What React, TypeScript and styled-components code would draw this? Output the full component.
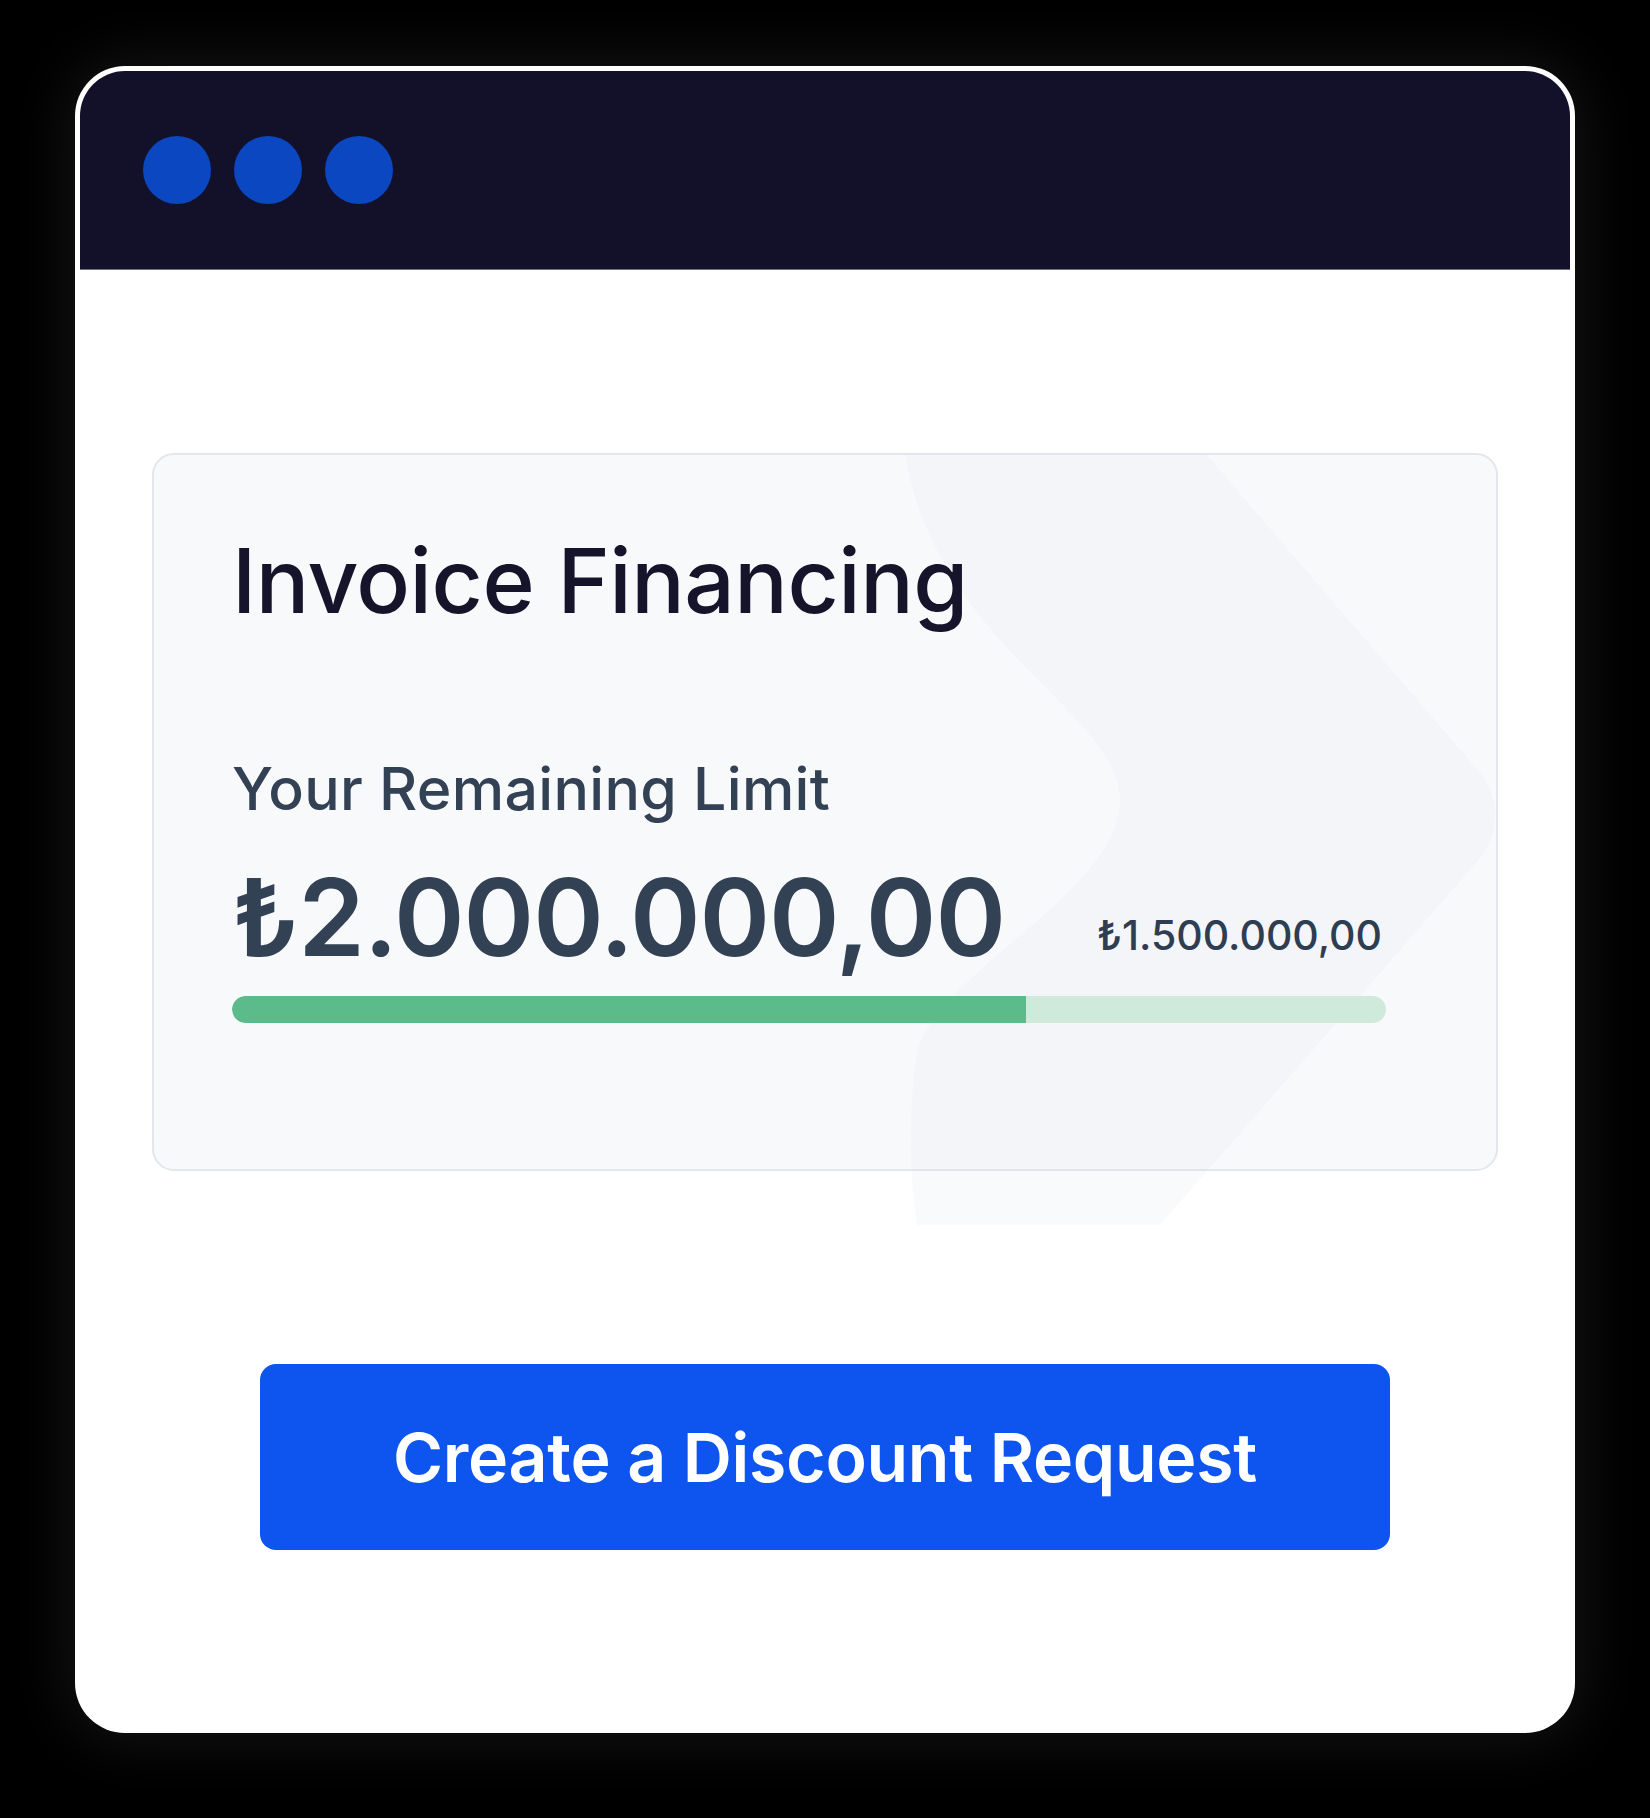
import styled, { createGlobalStyle } from "styled-components";

const GlobalStyle = createGlobalStyle`
  html, body {
    margin: 0;
    padding: 0;
    background: #000;
  }
  * {
    box-sizing: border-box;
  }
`;

// share of the limit shown as used on the bar
const used = 0.688;

const App: React.FC = () => {
  return (
    <>
      <GlobalStyle />
      <Page>
        <Window>
          <TitleBar>
            <Dot />
            <Dot />
            <Dot />
          </TitleBar>
          <Body>
            <Card>
              <Decoration
                width="640"
                height="780"
                viewBox="0 0 640 780"
                aria-hidden="true"
              >
                <path
                  d="M0 0 H300 L575 320 C595 345 595 380 575 405 L255 772 H12 C4 720 4 650 12 600 C30 520 215 440 215 347 C215 260 30 190 0 0 Z"
                  fill="rgba(215, 222, 236, 0.15)"
                />
              </Decoration>
              <Title>Invoice Financing</Title>
              <Label>Your Remaining Limit</Label>
              <AmountRow>
                <Amount>₺2.000.000,00</Amount>
                <SubAmount>₺1.500.000,00</SubAmount>
              </AmountRow>
              <Track>
                <Fill style={{ width: `${used * 100}%` }} />
              </Track>
            </Card>
            <ActionButton>Create a Discount Request</ActionButton>
          </Body>
        </Window>
      </Page>
    </>
  );
};

export default App;

const Page = styled.div`
  width: 1650px;
  min-height: 1818px;
  padding: 66px 75px;
  background: #000;
`;

const Window = styled.div`
  width: 1500px;
  height: 1667px;
  background: #fff;
  border-radius: 50px;
  padding: 5px 5px 0;
  box-shadow: 0 0 60px 8px rgba(22, 22, 22, 0.9);
  display: flex;
  flex-direction: column;
`;

const TitleBar = styled.div`
  height: 199px;
  background: #13112a;
  border-radius: 45px 45px 0 0;
  border-bottom: 1px solid #6f6e80;
  display: flex;
  align-items: center;
  gap: 23px;
  padding-left: 63px;
`;

const Dot = styled.span`
  width: 68px;
  height: 68px;
  border-radius: 50%;
  background: #0c47c2;
`;

const Body = styled.div`
  display: flex;
  flex-direction: column;
  align-items: center;
  padding: 183px 72px 0;
`;

const Card = styled.div`
  position: relative;
  width: 1346px;
  height: 718px;
  border: 2px solid #e3e6ec;
  border-radius: 22px;
  background: #f8f9fb;
  padding: 81px 110px 0 78px;
  display: flex;
  flex-direction: column;
`;

const Decoration = styled.svg`
  position: absolute;
  top: -2px;
  left: 751px;
  pointer-events: none;
`;

const Title = styled.h1`
  position: relative;
  margin: 0;
  font-family: Inter, "Liberation Sans", sans-serif;
  font-size: 89px;
  line-height: 90px;
  font-weight: 500;
  color: #15142b;
  letter-spacing: -0.5px;
`;

const Label = styled.div`
  position: relative;
  margin-top: 133px;
  font-family: Inter, "Liberation Sans", sans-serif;
  font-size: 59px;
  line-height: 59px;
  font-weight: 500;
  letter-spacing: 0.3px;
  color: #334155;
`;

const AmountRow = styled.div`
  position: relative;
  margin-top: 46px;
  display: flex;
  justify-content: space-between;
  align-items: flex-end;
`;

const Amount = styled.div`
  font-family: Inter, "DejaVu Sans", sans-serif;
  font-size: 107px;
  line-height: 107px;
  font-weight: 600;
  letter-spacing: -1px;
  color: #334155;
`;

const SubAmount = styled.div`
  margin-bottom: 15px;
  margin-right: 4px;
  font-family: Inter, "DejaVu Sans", sans-serif;
  font-size: 41px;
  line-height: 41px;
  font-weight: 500;
  color: #2f3d52;
`;

const Track = styled.div`
  position: relative;
  margin-top: 25px;
  height: 27px;
  border-radius: 14px;
  background: #cfeadb;
  overflow: hidden;
`;

const Fill = styled.div`
  height: 100%;
  background: #5bbb8a;
  border-radius: 14px 0 0 14px;
`;

const ActionButton = styled.button`
  margin-top: 193px;
  width: 1130px;
  height: 186px;
  border: none;
  border-radius: 16px;
  background: #0d55ee;
  color: #fff;
  font-family: Inter, "Liberation Sans", sans-serif;
  font-size: 68px;
  font-weight: 600;
  letter-spacing: -0.3px;
  cursor: pointer;
`;
